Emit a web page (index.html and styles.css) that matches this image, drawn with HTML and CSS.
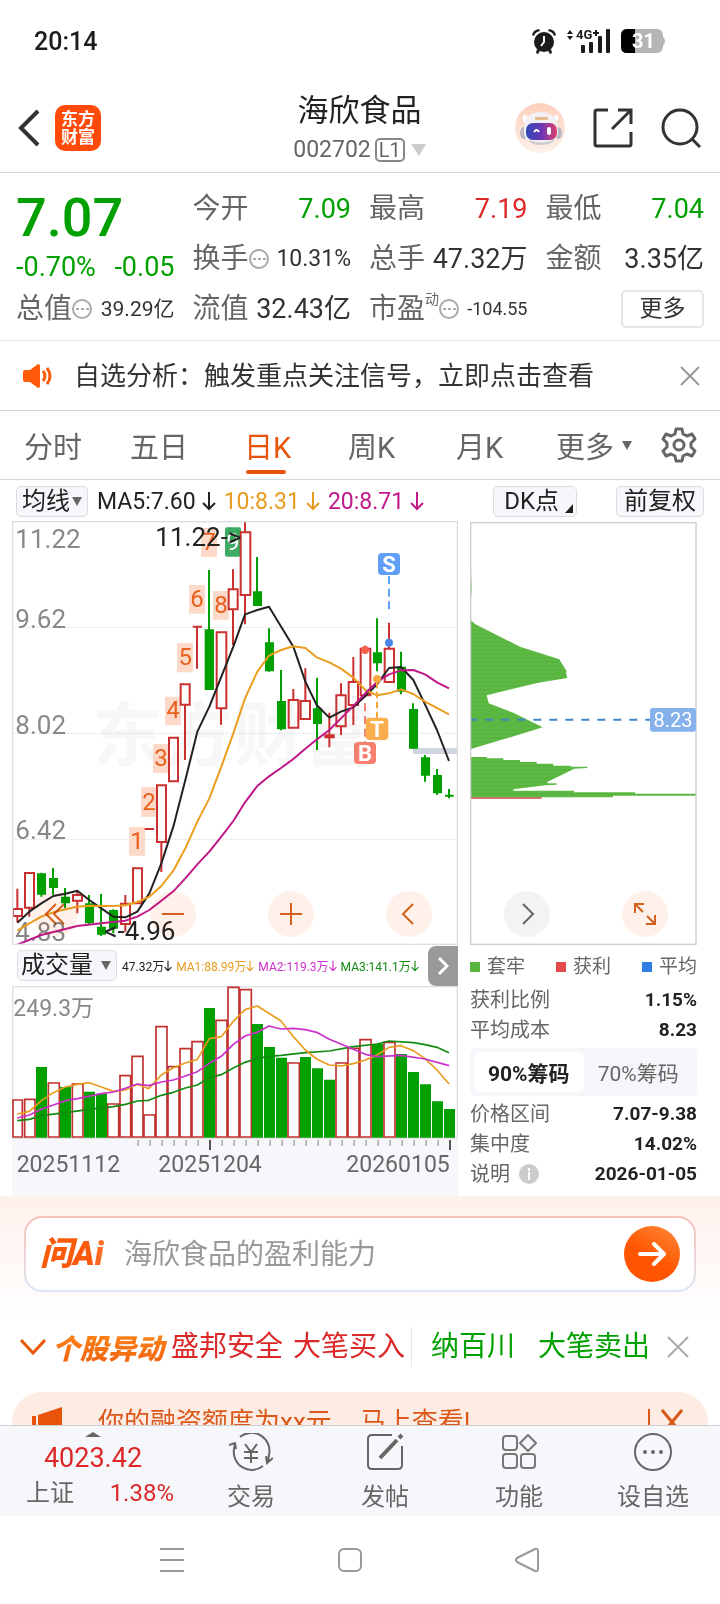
FILE: index.html
```html
<!DOCTYPE html>
<html lang="zh-CN">
<head>
<meta charset="utf-8">
<meta name="viewport" content="width=device-width, initial-scale=1">
<title>海欣食品 002702</title>
<link rel="stylesheet" href="styles.css">
</head>
<body>
<div class="app">
  <div class="status">
    <span class="clock">20:14</span>
    <div class="status-icons">
      <svg width="26" height="26" viewBox="0 0 26 26" fill="#1c1c1c"><circle cx="13" cy="14" r="10"/><path d="M1 7Q2 2 8 1L9 3Q4 4 3 8zM25 7Q24 2 18 1L17 3Q22 4 23 8zM6 21l3 2-2 3-2-1zM20 21l-3 2 2 3 2-1z"/><path d="M13 8v6l-3 4" fill="none" stroke="#fff" stroke-width="2"/></svg>
      <svg width="46" height="26" viewBox="0 0 46 26" fill="#1c1c1c"><path d="M1 6l3-4 3 4zM1 8l3 4 3-4z"/><rect x="15" y="17" width="4" height="8" rx="1"/><rect x="23" y="14" width="4" height="11" rx="1"/><rect x="32" y="8" width="4" height="17" rx="1"/><rect x="40" y="1" width="4" height="24" rx="1"/><text x="10" y="11" class="net">4G</text><path d="M27 4h2V2h2v2h2v2h-2v2h-2V6h-2z"/></svg>
      <svg width="44" height="24" viewBox="0 0 44 24"><rect width="42" height="24" rx="6" fill="#b5b5b5"/><path d="M42 8q2 1 2 4t-2 4z" fill="#b5b5b5"/><path d="M6 0h8v24H6q-6 0-6-6V6q0-6 6-6z" fill="#000"/><text x="11" y="19" class="batt">31</text></svg>
    </div>
  </div>

  <header class="header">
    <div class="header-left">
      <button class="icon-btn" aria-label="返回"><svg width="22" height="38" viewBox="0 0 22 38" fill="none" stroke="#333" stroke-width="4"><path d="M20 2L3 19l17 17"/></svg></button>
      <div class="logo"><span>东方</span><span>财富</span></div>
    </div>
    <div class="title-box">
      <h1 class="title">海欣食品</h1>
      <div class="code">002702<span class="level">L1</span><svg width="15" height="12" viewBox="0 0 15 12" fill="#ccc"><path d="M0 0h15L8 12z"/></svg></div>
    </div>
    <div class="header-right">
      <button class="icon-btn" aria-label="智能助手">
        <svg width="50" height="50" viewBox="0 0 50 50">
          <defs><linearGradient id="halo" x1="0" y1="0" x2="0" y2="1"><stop offset="0" stop-color="#fdcfba"/><stop offset="1" stop-color="#fff1ea"/></linearGradient><linearGradient id="visor" x1="0" y1="0" x2="1" y2="0"><stop offset="0" stop-color="#2f49b8"/><stop offset=".5" stop-color="#6b35b5"/><stop offset="1" stop-color="#e0436b"/></linearGradient></defs>
          <circle cx="25" cy="25" r="25" fill="url(#halo)"/>
          <path d="M10 20q-4-4-1-9l7 5zM40 20q5-4 3-9l-8 5z" fill="#fff"/>
          <ellipse cx="9" cy="30" rx="4" ry="6" fill="#b9b7c4"/><ellipse cx="43" cy="30" rx="4" ry="6" fill="#b9b7c4"/>
          <path d="M9 27Q9 9 26 9T43 27q1 14-17 14T9 27z" fill="#f1eff2"/>
          <path d="M13 36q12 7 27 0-3 6-14 6t-13-6z" fill="#cfcbd3"/>
          <rect x="20" y="14" width="13" height="3" rx="1" fill="#e8b98a"/>
          <rect x="11" y="20" width="31" height="17" rx="7" fill="url(#visor)"/>
          <path d="M19 29q3-4 5 0" fill="none" stroke="#fff" stroke-width="2"/><rect x="32" y="24" width="4" height="8" rx="2" fill="#fff"/>
        </svg>
      </button>
      <button class="icon-btn" aria-label="分享"><svg width="40" height="40" viewBox="0 0 40 40" fill="none" stroke="#333" stroke-width="3"><path d="M15 2H4Q2 2 2 4v32q0 2 2 2h32q2 0 2-2V24M19 21L38 2M25 2h13v14"/></svg></button>
      <button class="icon-btn" aria-label="搜索"><svg width="40" height="40" viewBox="0 0 40 40" fill="none" stroke="#333" stroke-width="3"><circle cx="19" cy="19" r="17"/><path d="M31 31l8 8"/></svg></button>
    </div>
  </header>

  <main class="main">
    <section class="quote">
      <div class="price down">7.07</div>
      <div class="cell"><span class="label">今开</span><span class="val down">7.09</span></div>
      <div class="cell"><span class="label">最高</span><span class="val up">7.19</span></div>
      <div class="cell"><span class="label">最低</span><span class="val down">7.04</span></div>
      <div class="cell"><span class="label">换手<svg class="info" viewBox="0 0 20 20"><circle cx="10" cy="10" r="9"/><path d="M4 10h3M9 10h3M14 10h3"/></svg></span><span class="val v-mid">10.31%</span></div>
      <div class="cell"><span class="label">总手</span><span class="val">47.32万</span></div>
      <div class="cell"><span class="label">金额</span><span class="val">3.35亿</span></div>
      <div class="cell"><span class="label">总值<svg class="info" viewBox="0 0 20 20"><circle cx="10" cy="10" r="9"/><path d="M4 10h3M9 10h3M14 10h3"/></svg></span><span class="val v-small">39.29亿</span></div>
      <div class="cell"><span class="label">流值</span><span class="val">32.43亿</span></div>
      <div class="cell"><span class="label">市盈<sup class="dyn">动</sup><svg class="info" viewBox="0 0 20 20"><circle cx="10" cy="10" r="9"/><path d="M4 10h3M9 10h3M14 10h3"/></svg></span><span class="val v-tiny">-104.55</span></div>
      <div class="cell cell-end"><button class="more-btn">更多</button></div>
      <div class="change down"><span>-0.70%</span><span>-0.05</span></div>
    </section>

    <section class="notice">
      <svg width="30" height="24" viewBox="0 0 30 24"><path d="M2 6h5l8-6q2 0 2 2v20q0 2-2 2l-8-6H2q-2 0-2-2V8q0-2 2-2z" fill="#ff5a0a"/><path d="M20 7q4 5 0 10M24 4q6 8 0 16" fill="none" stroke="#ff5a0a" stroke-width="3"/></svg>
      <p class="notice-text">自选分析：触发重点关注信号，立即点击查看</p>
      <button class="icon-btn" aria-label="关闭"><svg width="20" height="20" viewBox="0 0 20 20" stroke="#999" stroke-width="2"><path d="M1 1l18 18M19 1L1 19"/></svg></button>
    </section>

    <nav class="tabs">
      <button class="tab">分时</button>
      <button class="tab">五日</button>
      <button class="tab active">日K</button>
      <button class="tab">周K</button>
      <button class="tab">月K</button>
      <button class="tab">更多<svg width="10" height="9" viewBox="0 0 10 9" fill="#666"><path d="M0 0h10L5 9z"/></svg></button>
      <button class="icon-btn" aria-label="设置"><svg width="36" height="36" viewBox="0 0 36 36" fill="none" stroke="#666" stroke-width="3" stroke-linejoin="round"><path d="M15 2h6l1 5 4 2 5-2 3 5-4 4v4l4 4-3 5-5-2-4 2-1 5h-6l-1-5-4-2-5 2-3-5 4-4v-4l-4-4 3-5 5 2 4-2z"/><circle cx="18" cy="18" r="5"/></svg></button>
    </nav>

    <div class="ma-row">
      <span class="pick"><select class="chip" aria-label="均线指标"><option>均线</option></select><svg class="caret" width="10" height="9" viewBox="0 0 10 9" fill="#666"><path d="M0 0h10L5 9z"/></svg></span>
      <div class="ma-list">
        <span class="c-black">MA5:7.60<svg class="arr" viewBox="0 0 14 20"><path d="M7 1v17M1 12l6 6 6-6"/></svg></span>
        <span class="c-orange">10:8.31<svg class="arr" viewBox="0 0 14 20"><path d="M7 1v17M1 12l6 6 6-6"/></svg></span>
        <span class="c-pink">20:8.71<svg class="arr" viewBox="0 0 14 20"><path d="M7 1v17M1 12l6 6 6-6"/></svg></span>
      </div>
      <button class="chip chip-dk">DK点<svg width="8" height="9" viewBox="0 0 8 9" fill="#222"><path d="M8 0v9H0z"/></svg></button>
      <button class="chip">前复权</button>
    </div>

    <div class="charts">
      <div class="left">
        <div class="plot">
          <svg class="canvas" viewBox="36 33 1338 1272">
            <text class="mark" x="277" y="752">东方财富</text>
            <path d="M36 352H1374M36 670H1374M36 988H1374" stroke="#ccc" stroke-width="3" stroke-dasharray="3 5"/>
            <rect x="1239" y="714" width="135" height="18" fill="#d0d4dc"/>
            <g class="axis-label"><text x="46" y="115">11.22</text><text x="46" y="354">9.62</text><text x="46" y="672">8.02</text><text x="46" y="988">6.42</text><text x="46" y="1292">4.83</text></g>
            <path fill="#fdd9c9" d="M387 951h48v86h-48zM423 832h48v88h-48zM459 702h48v86h-48zM495 560h48v86h-48zM531 400h48v87h-48zM567 225h48v86h-48zM603 54h48v87h-48zM639 243h48v86h-48z"/>
            <rect x="675" y="52" width="48" height="88" rx="6" fill="#3cab63"/>
            <g class="tag"><text x="411" y="1017">1</text><text x="447" y="899">2</text><text x="483" y="768">3</text><text x="519" y="624">4</text><text x="556" y="465">5</text><text x="591" y="290">6</text><text x="627" y="120">7</text><text x="663" y="308">8</text><text class="tag-w" x="699" y="120">9</text></g>
            <g fill="none" stroke="#c9302f" stroke-width="6">
              <path d="M52 1136v60M52 1218v18M88 1194v26M232 1145v9M232 1172v38M376 1155v25M376 1242v23M484 996v90M555 584v166M591 350v126M663 596v48M699 178v60M699 298v107M735 36v31M735 255v88M880 537v32M916 475v98M988 608v104M1023 520v35M1023 650v25M1060 441v74M1060 584v61M1096 407v8M1167 338v77M434 957h28M578 350h28M973 676h31M973 682h31"/>
              <path d="M39 1197h27v21H39zM75 1089h27v104H75zM219 1155h27v17h-27zM363 1181h27v61h-27zM399 1075h27v105h-27zM471 826h27v170h-27zM507 683h27v131h-27zM542 523h27v61h-27zM650 367h29v228h-29zM686 238h27v60h-27zM722 67h29v188h-29zM866 570h29v83h-29zM902 573h28v54h-28zM1009 556h28v93h-28zM1046 516h28v69h-28zM1082 416h29v140h-29zM1154 416h28v100h-28z"/>
            </g>
            <g stroke="#00a000">
              <path stroke-width="6" d="M124 1088v72M159 1074v80M195 1134v60M267 1155v89M303 1152v126M340 1198v72M627 180v180M771 141v120M807 355v130M843 480v181M951 503v217M1131 325v159M1203 425v128M1239 580v136M1275 735v80M1311 777v78M1347 837v28M1335 857h26"/>
              <path stroke="none" fill="#00a000" d="M111 1090h27v64h-27zM147 1104h27v30h-27zM183 1160h27v20h-27zM255 1180h27v60h-27zM291 1250h27v24h-27zM327 1200h27v56h-27zM614 358h28v182h-28zM759 244h27v44h-27zM795 397h27v87h-27zM831 573h27v85h-27zM939 595h27v47h-27zM1119 427h27v33h-27zM1191 470h27v75h-27zM1227 597h27v119h-27zM1263 742h27v55h-27zM1299 795h27v55h-27z"/>
            </g>
            <g fill="none" stroke-width="6" stroke-linejoin="round">
              <path stroke="#222" d="M52 1238L88 1205 124 1180 160 1158 196 1151 232 1142 268 1170 304 1195 340 1220 376 1222 412 1205 448 1150 484 1060 520 950 556 810 592 665 628 590 664 500 700 410 735 313 772 300 807 290 880 410 916 515 950 585 988 623 1023 605 1060 592 1096 558 1131 523 1167 474 1203 471 1240 510 1275 583 1311 660 1347 753"/>
              <path stroke="#eb9e1e" d="M52 1262L88 1240 124 1220 160 1207 196 1198 232 1190 268 1187 340 1188 376 1186 412 1176 448 1160 484 1128 520 1082 556 1015 592 935 628 865 664 770 700 670 735 565 772 485 807 437 843 420 880 409 916 414 950 442 988 457 1023 476 1060 503 1096 540 1131 556 1167 550 1203 538 1240 552 1275 575 1347 613"/>
              <path stroke="#c01888" d="M52 1304L124 1275 232 1248 304 1240 376 1232 412 1220 448 1200 484 1172 520 1144 556 1105 592 1063 628 1025 664 980 700 933 735 877 772 828 807 799 843 774 880 747 916 716 951 688 988 660 1023 625 1060 588 1096 550 1131 516 1167 493 1203 481 1240 480 1275 493 1311 517 1347 535"/>
            </g>
            <g class="axis-label dark"><text x="466" y="109">11.22-&gt;</text><text x="313" y="1290">&lt;-4.96</text></g>
            <g fill="none" stroke-width="6">
              <path stroke="#5f9ff5" stroke-dasharray="24 14" d="M1167 198v115"/><path stroke="#f3a83c" stroke-dasharray="20 10" d="M1131 515v108"/><path stroke="#f08070" stroke-dasharray="24 14" d="M1095 580v116"/>
            </g>
            <circle cx="1167" cy="398" r="12" fill="#4a86e8"/><circle cx="1131" cy="507" r="12" fill="#f9a840"/><circle cx="1095" cy="420" r="12" fill="#f5604f"/>
            <rect x="1134" y="129" width="66" height="66" rx="12" fill="#5f9ff5"/><rect x="1097" y="623" width="68" height="67" rx="12" fill="#fcae4d"/><rect x="1062" y="696" width="66" height="66" rx="12" fill="#f77f70"/>
            <g class="signal"><text x="1167" y="185">S</text><text x="1131" y="680">T</text><text x="1095" y="752">B</text></g>
            <rect x="38" y="35" width="1334" height="1268" fill="none" stroke="#dedede" stroke-width="4"/>
          </svg>
          <div class="tools tools-left">
            <button class="round" aria-label="最早"><svg viewBox="0 0 24 24"><path d="M13 2L3 12l10 10M21 2L11 12l10 10"/></svg></button>
            <button class="round" aria-label="缩小"><svg viewBox="0 0 24 24"><path d="M1 12h22"/></svg></button>
            <button class="round" aria-label="放大"><svg viewBox="0 0 24 24"><path d="M1 12h22M12 1v22"/></svg></button>
            <button class="round" aria-label="向左"><svg viewBox="0 0 24 24"><path d="M16 2L6 12l10 10"/></svg></button>
          </div>
        </div>

        <div class="vol-row">
          <span class="pick"><select class="chip chip-vol" aria-label="副图指标"><option>成交量</option></select><svg class="caret" width="10" height="9" viewBox="0 0 10 9" fill="#666"><path d="M0 0h10L5 9z"/></svg></span>
          <div class="vol-list">
            <span class="c-black">47.32万<svg class="arr" viewBox="0 0 14 20"><path d="M7 1v17M1 12l6 6 6-6"/></svg></span>
            <span class="c-orange">MA1:88.99万<svg class="arr" viewBox="0 0 14 20"><path d="M7 1v17M1 12l6 6 6-6"/></svg></span>
            <span class="c-violet">MA2:119.3万<svg class="arr" viewBox="0 0 14 20"><path d="M7 1v17M1 12l6 6 6-6"/></svg></span>
            <span class="c-green">MA3:141.1万<svg class="arr" viewBox="0 0 14 20"><path d="M7 1v17M1 12l6 6 6-6"/></svg></span>
          </div>
          <button class="next" aria-label="下一个"><svg width="12" height="18" viewBox="0 0 12 18" fill="none" stroke="#fff" stroke-width="3"><path d="M2 1l8 8-8 8"/></svg></button>
        </div>

        <svg class="canvas" viewBox="36 138 1338 630">
          <rect x="36" y="597" width="1338" height="171" fill="#f7f7fb"/>
          <rect x="38" y="140" width="1334" height="455" fill="#fff" stroke="#dedede" stroke-width="4"/>
          <text class="vol-label" x="40" y="228">249.3万</text>
          <path fill="#fff" stroke="#c0302f" stroke-width="5" d="M39 591V480h28v111zM74 591V478h31v113zM145 591V429h33v162zM217 591V432h32v159zM323 591V492h33v99zM360 591V407h32v184zM396 591V349h33v242zM432 591V525h33v66zM468 591V260h33v331zM504 591V380h33v211zM540 591V326h33v265zM576 591V305h33v286zM648 591V241h33v350zM684 591V142h33v449zM720 591V149h34v442zM864 591V369h34v222zM1008 591V369h33v222zM1044 591V325h33v266zM1080 591V299h33v292zM1152 591V307h33v284z"/>
          <path fill="#00a000" d="M108 593V381h33v212zM180 593V441h33v152zM252 593V455h33v138zM288 593V461h33v132zM612 593V204h33v389zM756 593V252h33v341zM792 593V321h33v272zM828 593V353h33v240zM900 593V351h33v242zM936 593V385h33v208zM972 593V419h33v174zM1116 593V312h33v281zM1188 593V342h33v251zM1224 593V396h33v197zM1260 593V433h33v160zM1296 593V484h33v109zM1332 593V507h33v86z"/>
          <g fill="none" stroke-width="5" stroke-linejoin="round">
            <path stroke="#128a12" d="M52 542L88 538 124 527 196 518 268 508 340 500 376 493 412 483 446 481 484 466 520 457 556 444 592 435 628 413 664 404 700 384 735 367 772 355 807 349 843 346 916 338 988 333 1060 320 1131 312 1167 303 1240 308 1275 314 1311 322 1347 338"/>
            <path stroke="#e99b1f" d="M52 522L88 514 124 482 160 458 196 441 232 433 268 428 304 441 340 454 376 450 412 433 446 446 484 405 520 383 556 369 592 358 628 296 664 290 700 244 735 209 772 198 843 243 880 290 916 330 950 357 988 375 1023 378 1060 371 1096 360 1131 345 1167 322 1203 317 1240 332 1275 356 1311 390 1347 432"/>
            <path stroke="#cb30cb" d="M52 534L88 525 124 508 160 495 196 482 232 476 304 461 340 456 376 445 412 432 446 437 484 426 520 420 556 408 592 395 628 370 664 349 700 313 735 288 772 277 807 258 843 267 880 265 916 269 950 277 988 298 1023 312 1060 328 1096 343 1131 350 1203 346 1275 357 1347 377"/>
          </g>
          <path d="M412 609H1330" stroke="#b0b0b0" stroke-width="18" stroke-dasharray="5 31"/>
          <path d="M630 600v30M1350 600v30" stroke="#555" stroke-width="6"/>
          <g class="dates"><text x="50" y="696">20251112</text><text x="475" y="696">20251204</text><text x="1039" y="696">20260105</text></g>
        </svg>
      </div>

      <div class="right">
        <div class="plot">
          <svg class="canvas" viewBox="30 33 681 1272">
            <defs><pattern id="rows" width="20" height="12" patternUnits="userSpaceOnUse"><rect width="20" height="12" fill="#58b63e"/><rect width="20" height="2" y="5" fill="#69be52"/></pattern></defs>
            <path fill="url(#rows)" d="M30 100L35 240 30 300zM30 328L45 342 180 410 298 448 320 484 318 490 322 504 235 518 80 556 86 580 160 608 248 652 210 664 30 718zM30 741H80V745H130V750H180V756H230V761H280V767H332V770H382V774L343 776 262 816V820H290V824L256 826 160 838V842H342V847H525V851H708V857H459V862H30z"/>
            <path d="M30 864H245" stroke="#c05040" stroke-width="5"/>
            <path d="M28 629H570" stroke="#3d86c9" stroke-width="6" stroke-dasharray="24 24"/>
            <rect x="32" y="38" width="676" height="1265" fill="none" stroke="#ccc" stroke-width="4"/>
            <rect x="570" y="594" width="138" height="71" rx="8" fill="#85b1ec"/>
            <text class="avg" x="639" y="651">8.23</text>
          </svg>
          <div class="tools tools-right">
            <button class="round round-gray" aria-label="向右"><svg viewBox="0 0 24 24"><path d="M8 2l10 10L8 22"/></svg></button>
            <button class="round" aria-label="全屏"><svg viewBox="0 0 24 24"><path d="M2 11V2h9M2 2l8 8M22 13v9h-9M22 22l-8-8"/></svg></button>
          </div>
        </div>
        <ul class="legend">
          <li><i class="sq sq-green"></i>套牢</li>
          <li><i class="sq sq-red"></i>获利</li>
          <li><i class="sq sq-blue"></i>平均</li>
        </ul>
        <div class="stat"><span>获利比例</span><b>1.15%</b></div>
        <div class="stat"><span>平均成本</span><b>8.23</b></div>
        <div class="segment"><button class="seg seg-on">90%筹码</button><button class="seg">70%筹码</button></div>
        <div class="stat"><span>价格区间</span><b>7.07-9.38</b></div>
        <div class="stat"><span>集中度</span><b>14.02%</b></div>
        <div class="stat"><span class="explain">说明<svg width="20" height="20" viewBox="0 0 20 20"><circle cx="10" cy="10" r="10" fill="#ccc"/><path d="M10 4v3M10 8v8" stroke="#fff" stroke-width="2"/></svg></span><b>2026-01-05</b></div>
      </div>
    </div>

    <section class="ai">
      <form class="ai-box">
        <span class="ai-logo">问Ai</span>
        <input class="ai-input" type="text" placeholder="海欣食品的盈利能力" aria-label="问AI">
        <button class="ai-go" type="button" aria-label="发送"><svg width="28" height="24" viewBox="0 0 28 24" fill="none" stroke="#fff" stroke-width="4" stroke-linecap="round" stroke-linejoin="round"><path d="M2 12h23M16 2l10 10-10 10"/></svg></button>
      </form>
    </section>

    <section class="movers">
      <svg width="26" height="16" viewBox="0 0 26 16" fill="none" stroke="#e8590c" stroke-width="3"><path d="M1 1l12 13L25 1"/></svg>
      <span class="movers-title">个股异动</span>
      <a class="mover up" href="#"><span>盛邦安全</span><span>大笔买入</span></a>
      <a class="mover mover-2 down" href="#"><span>纳百川</span><span>大笔卖出</span></a>
      <button class="icon-btn" aria-label="关闭"><svg width="22" height="22" viewBox="0 0 22 22" stroke="#aaa" stroke-width="2"><path d="M1 1l20 20M21 1L1 21"/></svg></button>
    </section>

    <section class="promo">
      <svg width="32" height="30" viewBox="0 0 32 30" fill="#e8550a"><path d="M0 9h4v12H0zM6 8L30 0v28L6 20z"/></svg>
      <p class="promo-text"><span>你的融资额度为xx元</span><span>马上查看!</span></p>
      <span class="promo-line"></span>
      <button class="icon-btn" aria-label="关闭"><svg width="22" height="26" viewBox="0 0 22 26" stroke="#d9581a" stroke-width="3"><path d="M1 1l20 24M21 1L1 25"/></svg></button>
    </section>
  </main>

  <footer class="bar">
    <div class="index">
      <svg class="index-up" width="16" height="5" viewBox="0 0 16 5" fill="#666"><path d="M0 5l8-5 8 5z"/></svg>
      <span class="index-num up">4023.42</span>
      <div class="index-row"><span>上证</span><span class="up">1.38%</span></div>
    </div>
    <button class="item"><svg width="44" height="38" viewBox="0 0 44 38" fill="none" stroke="#666" stroke-width="2"><path d="M11 4A18 18 0 0 1 40 22L39 28M37 23l1 7 6-5M34 33A18 18 0 0 1 5 16L6 10M0 12l6-2 1 6M16 11l6 8 6-8M22 19v11M15 19h14M15 25h14"/></svg>交易</button>
    <button class="item"><svg width="38" height="38" viewBox="0 0 38 38" fill="none" stroke="#666" stroke-width="2"><path d="M26 2H6Q2 2 2 6v26q0 4 4 4h26q4 0 4-4V13"/><path d="M14 25L31 7M33 5l3-3" stroke-width="4"/></svg>发帖</button>
    <button class="item"><svg width="36" height="38" viewBox="0 0 36 38" fill="none" stroke="#777" stroke-width="2"><rect x="2" y="3" width="14" height="14" rx="3"/><rect x="2" y="21" width="14" height="14" rx="3"/><rect x="20" y="21" width="14" height="14" rx="3"/><path d="M27 2l8 8-8 8-8-8z" stroke-linejoin="round"/></svg>功能</button>
    <button class="item"><svg width="38" height="38" viewBox="0 0 38 38" fill="none" stroke="#666" stroke-width="2"><circle cx="19" cy="19" r="18"/><g fill="#666" stroke="none"><circle cx="11" cy="19" r="2"/><circle cx="19" cy="19" r="2"/><circle cx="27" cy="19" r="2"/></g></svg>设自选</button>
  </footer>

  <div class="sysnav">
    <svg width="24" height="26" viewBox="0 0 24 26" stroke="#999" stroke-width="2"><path d="M0 2h24M0 13h24M0 24h24"/></svg>
    <svg width="24" height="26" viewBox="0 0 24 26" fill="none" stroke="#999" stroke-width="2"><rect x="1" y="2" width="22" height="22" rx="5"/></svg>
    <svg width="24" height="26" viewBox="0 0 24 26" fill="none" stroke="#999" stroke-width="2" stroke-linejoin="round"><path d="M2 11L20 2q3-1 3 2v18q0 3-3 2L2 15q-2-2 0-4z"/></svg>
  </div>
</div>
</body>
</html>
```
FILE: styles.css
```css
* { box-sizing: border-box; }
body {
  margin: 0;
  background: #fff;
  color: #333;
  font-family: Roboto, "Noto Sans CJK SC", sans-serif;
}
h1, p, ul { margin: 0; padding: 0; }
svg { display: block; flex: none; }
button, select, input { font: inherit; color: inherit; margin: 0; }
button { border: 0; padding: 0; background: none; white-space: nowrap; }
a { color: inherit; text-decoration: none; }
.app { display: flex; flex-direction: column; height: 100vh; }
.icon-btn { display: flex; }
.up { color: #dc2828; }
.down { color: #00a000; }

.status { display: flex; align-items: center; justify-content: space-between; height: 82px; padding: 0 55px 0 34px; }
.clock { font-size: 25px; font-weight: 500; color: #1c1c1c; }
.status-icons { display: flex; align-items: center; gap: 9px; }
.net { font-size: 13px; font-weight: 700; }
.batt { font-size: 20px; font-weight: 700; fill: #fff; }

.header { display: grid; grid-template-columns: 1fr auto 1fr; align-items: center; height: 91px; padding: 2px 19px 0 18px; border-bottom: 1px solid #d6d6d6; }
.header-left { display: flex; align-items: center; gap: 15px; }
.logo { display: flex; flex-direction: column; justify-content: center; width: 46px; height: 46px; border-radius: 10px; background: #ff4a0a; color: #fff; font-size: 17px; line-height: 18px; font-weight: 700; text-align: center; }
.title-box { display: flex; flex-direction: column; align-items: center; padding-top: 4px; }
.title { font-size: 31px; line-height: 40px; font-weight: 400; color: #222; }
.code { display: flex; align-items: center; gap: 4px; font-size: 23px; line-height: 38px; color: #666; }
.level { height: 24px; padding: 0 2px; border: 2px solid #888; border-radius: 5px; font-size: 20px; line-height: 21px; }
.code svg { margin-left: 2px; }
.header-right { display: flex; align-items: center; justify-content: flex-end; gap: 28px; }

.main { flex: 1; min-height: 0; overflow-y: auto; scrollbar-width: none; }

.quote { display: grid; grid-template-columns: repeat(4, 1fr); grid-template-rows: 50px 17px 33px 50px; column-gap: 18px; padding: 11px 16px 6px; border-bottom: 1px solid #eaeaea; }
.price { grid-area: 1 / 1 / 3 / 2; font-size: 54px; line-height: 67px; font-weight: 500; }
.change { grid-area: 3 / 1 / 4 / 2; display: flex; justify-content: space-between; font-size: 27px; line-height: 33px; }
.cell { display: flex; align-items: center; justify-content: space-between; font-size: 27px; line-height: 34px; white-space: nowrap; }
.cell:nth-child(n+5):nth-child(-n+7) { grid-row: 2 / 4; }
.cell:nth-child(n+8) { grid-row: 4; }
.cell:nth-child(5) { grid-column: 2; }
.cell:nth-child(8) { grid-column: 1; }
.label { display: flex; align-items: center; color: #666; font-size: 28px; }
.info { width: 20px; height: 20px; fill: none; stroke: #aaa; stroke-width: 2; }
.dyn { align-self: flex-start; font-size: 14px; line-height: 14px; }
.v-mid { font-size: 23px; }
.v-small { font-size: 21px; }
.v-tiny { font-size: 18px; }
.cell-end { justify-content: flex-end; }
.more-btn { width: 83px; height: 38px; border: 2px solid #e6e6e6; border-radius: 5px; font-size: 23px; line-height: 30px; }

.notice { display: flex; align-items: center; gap: 21px; height: 70px; padding: 0 20px 0 23px; border-bottom: 1px solid #d6d6d6; }
.notice-text { flex: 1; font-size: 26px; line-height: 34px; white-space: nowrap; }

.tabs { display: grid; grid-template-columns: 106fr 114fr 104fr 108fr 100fr 105fr 36fr; align-items: center; justify-items: start; height: 69px; padding: 0 23px 0 24px; border-bottom: 1px solid #d6d6d6; color: #666; }
.tab { position: relative; display: flex; align-items: center; gap: 8px; height: 68px; font-size: 29px; }
.active { color: #e8550a; }
.active::after { content: ""; position: absolute; left: 2px; right: 5px; bottom: 5px; height: 4px; border-radius: 2px; background: #e8550a; }

.ma-row { display: flex; align-items: center; height: 41px; padding: 1px 16px 0; gap: 9px; color: #222; }
.pick { position: relative; flex: none; }
.caret { position: absolute; right: 6px; top: 11px; pointer-events: none; }
.chip { display: block; height: 31px; padding: 0 7px; border: 1px solid #dadde2; border-radius: 5px; background: #f6f7fa; font-size: 24px; line-height: 29px; appearance: none; color: #222; }
select.chip { width: 72px; padding: 0 5px; }
select.chip-vol { width: 100px; padding: 0 3px; }
.ma-list { display: flex; flex: 1; gap: 6px; font-size: 23px; }
.ma-list span, .vol-list span { display: flex; align-items: center; white-space: nowrap; }
.arr { width: 14px; height: 20px; fill: none; stroke: currentColor; stroke-width: 2; }
.ma-list .arr { margin: 0 2px 0 6px; }
.c-black { color: #222; }
.c-orange { color: #e99b1f; }
.c-pink { color: #c01888; }
.c-violet { color: #cb30cb; }
.c-green { color: #128a12; }
.chip-dk { display: flex; align-items: flex-end; gap: 6px; margin-right: 30px; padding: 0 3px 0 10px; }
.chip-dk svg { margin-bottom: 3px; }

.charts { display: grid; grid-template-columns: 446fr 227fr; column-gap: 12px; padding: 0 23px 0 12px; }
.plot { position: relative; }
.canvas { width: 100%; height: auto; }
.canvas text { font-family: Roboto, "Noto Sans CJK SC", sans-serif; }
.mark { font-size: 212px; font-weight: 700; fill: #f7f7f8; }
.axis-label { font-size: 78px; fill: #888; }
.dark { fill: #222; }
.tag { font-size: 72px; fill: #e8601c; text-anchor: middle; }
.tag-w { fill: #fff; }
.signal { font-size: 66px; font-weight: 700; fill: #fff; text-anchor: middle; }
.vol-label { font-size: 69px; fill: #888; }
.dates { font-size: 69px; fill: #666; }
.avg { font-size: 60px; fill: #fff; text-anchor: middle; }
.tools { position: absolute; left: 0; right: 0; bottom: 8px; display: flex; justify-content: space-between; mix-blend-mode: multiply; }
.tools-left { padding: 0 26px 0 20px; }
.tools-right { padding: 0 29px 0 34px; }
.round { display: grid; place-items: center; width: 46px; height: 46px; border-radius: 50%; background: #fff1ea; }
.round svg { width: 24px; height: 24px; fill: none; stroke: #d4621f; stroke-width: 2; }
.round-gray { background: #f3f3f3; }
.round-gray svg { stroke: #666; }

.vol-row { display: flex; align-items: center; height: 41px; padding-left: 5px; gap: 5px; }
.vol-list { display: flex; flex: 1; gap: 4px; font-size: 12px; }
.vol-list .arr { width: 8px; height: 16px; }
.next { display: grid; place-items: center; width: 30px; height: 40px; border-radius: 8px 0 0 8px; background: #999; }

.right { color: #666; font-size: 20px; }
.legend { display: flex; justify-content: space-between; padding: 7px 0 3px; list-style: none; font-size: 19px; line-height: 30px; }
.legend li { display: flex; align-items: center; gap: 7px; }
.sq { width: 10px; height: 10px; }
.sq-green { background: #58b63e; }
.sq-red { background: #e34b4b; }
.sq-blue { background: #2f80e4; }
.stat { display: flex; align-items: center; justify-content: space-between; line-height: 30px; }
.stat b { color: #222; font-size: 19px; font-weight: 700; }
.explain { display: flex; align-items: center; gap: 9px; }
.segment { display: flex; margin: 3px 0; padding: 4px; border-radius: 5px; background: #f6f6fa; }
.seg { flex: 1; height: 40px; border-radius: 5px; font-size: 21px; }
.seg-on { background: #fff; color: #222; font-weight: 700; }

.ai { padding: 20px 24px 28px; background: linear-gradient(#fff1ec, #fff); }
.ai-box { display: flex; align-items: center; height: 76px; padding: 0 14px; border: 2px solid transparent; border-radius: 18px; background: linear-gradient(#fff, #fff) padding-box, linear-gradient(#f8c1b7, #dfe5f5) border-box; }
.ai-logo { width: 84px; font-size: 33px; line-height: 44px; font-weight: 900; font-style: italic; background: linear-gradient(90deg, #fb5a0a 60%, #ff9a70); background-clip: text; color: transparent; }
.ai-input { flex: 1; min-width: 0; padding: 0; border: 0; outline: 0; background: none; font-size: 28px; }
.ai-input::placeholder { color: #999; }
.ai-go { display: grid; place-items: center; width: 56px; height: 56px; border-radius: 50%; background: linear-gradient(30deg, #ff5500 45%, #ff8c3c); }

.movers { display: flex; align-items: center; height: 52px; margin-top: 1px; padding: 0 31px 0 20px; font-size: 28px; white-space: nowrap; }
.movers-title { margin: 0 4px 0 6px; padding-right: 3px; font-weight: 900; font-style: italic; background: linear-gradient(#ff8a1a, #f06010); background-clip: text; color: transparent; }
.mover { display: flex; gap: 10px; padding-right: 6px; line-height: 40px; }
.mover-2 { flex: 1; justify-content: space-between; padding: 0 17px 0 19px; border-left: 1px solid #e8e8e8; }

.promo { display: flex; align-items: center; height: 60px; margin: 19px 12px 0; padding: 0 25px 0 20px; border-radius: 30px; background: #fcece3; color: #d9581a; }
.promo-text { display: flex; flex: 1; gap: 28px; margin-left: 34px; font-size: 26px; line-height: 34px; white-space: nowrap; }
.promo-line { width: 2px; height: 26px; margin-right: 11px; background: #d9581a; }

.bar { display: grid; grid-template-columns: 184fr repeat(4, 134fr); height: 91px; border-top: 1px solid #cfcfcf; background: #f6f7fa; color: #666; font-size: 24px; }
.index { display: flex; flex-direction: column; align-items: center; padding: 6px 10px 0 26px; }
.index-num { font-size: 27px; line-height: 42px; padding-right: 14px; }
.index-up { margin-right: 14px; }
.index-row { display: flex; justify-content: space-between; align-self: stretch; line-height: 28px; }
.item { display: flex; flex-direction: column; align-items: center; gap: 7px; padding-top: 7px; line-height: 38px; }

.sysnav { display: grid; grid-template-columns: 261fr 178fr 281fr; height: 88px; align-items: center; }
.sysnav svg { justify-self: center; }
.sysnav svg:first-child { justify-self: end; margin-right: 77px; }
.sysnav svg:last-child { justify-self: start; margin-left: 76px; }
```
